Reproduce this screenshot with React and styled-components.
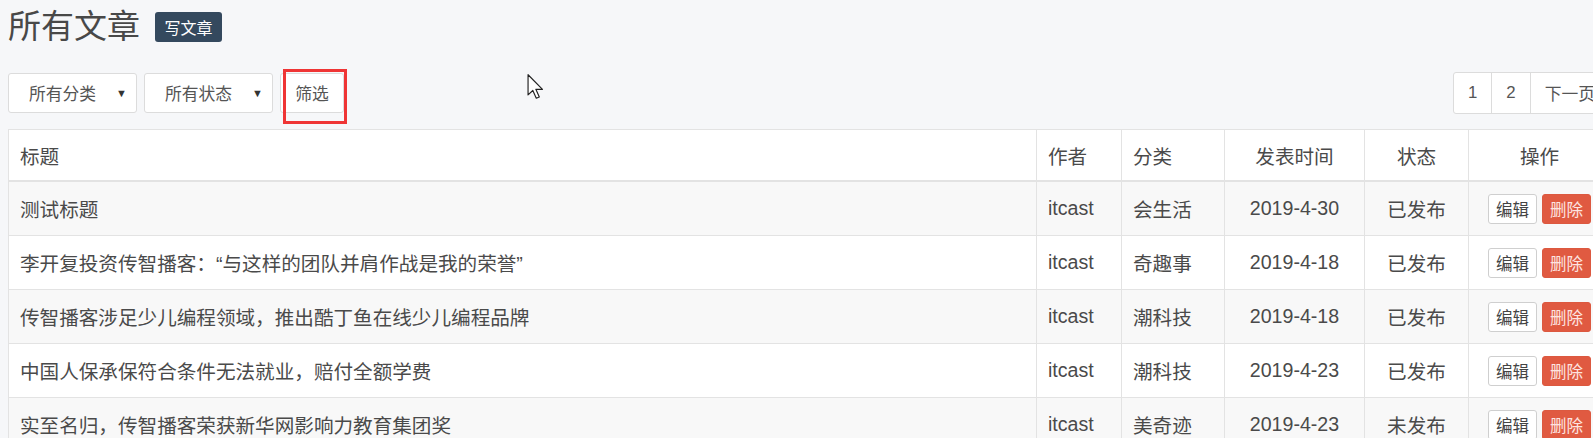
import React from "react";
import styled, { createGlobalStyle } from "styled-components";

const GlobalStyle = createGlobalStyle`
  html, body {
    margin: 0;
    padding: 0;
    overflow: hidden;
    background: #f6f7f9;
  }
  body {
    font-family: "Liberation Sans", "Noto Sans CJK SC", sans-serif;
    color: #4a4a4a;
  }
`;

const Page = styled.div`
  position: relative;
  width: 1602px;
  padding-left: 8px;
`;

const Header = styled.div`
  display: flex;
  align-items: center;
  height: 54px;
`;

const Title = styled.h1`
  margin: 0;
  font-size: 33px;
  font-weight: normal;
  line-height: 36px;
  color: #484848;
`;

const Badge = styled.span`
  display: inline-flex;
  align-items: center;
  justify-content: center;
  margin-left: 15px;
  width: 67px;
  height: 30px;
  border-radius: 3px;
  background: #34495e;
  color: #fff;
  font-size: 16px;
`;

const Toolbar = styled.div`
  display: flex;
  align-items: center;
  gap: 7px;
  padding: 18px 0 15px;
`;

const Select = styled.div`
  box-sizing: border-box;
  display: flex;
  align-items: center;
  justify-content: space-between;
  width: 129px;
  height: 40px;
  padding: 0 9px 0 20px;
  background: #fff;
  border: 1px solid #dcdcdc;
  border-radius: 3px;
  font-size: 16.8px;
  color: #555;
`;

const Caret = styled.span`
  font-size: 11px;
  color: #333;
`;

const FilterWrap = styled.div`
  position: relative;
`;

const Button = styled.div`
  box-sizing: border-box;
  display: flex;
  align-items: center;
  justify-content: center;
  width: 64px;
  height: 40px;
  background: #fff;
  border: 1px solid #dcdcdc;
  border-radius: 3px;
  font-size: 16.8px;
  color: #555;
`;

const Mark = styled.div`
  position: absolute;
  left: 3px;
  top: -4px;
  width: 64px;
  height: 55px;
  box-sizing: border-box;
  border: 3px solid #ef3535;
`;

const Pager = styled.div`
  display: flex;
  margin-left: auto;
  height: 40px;
  background: #fff;
  border: 1px solid #dcdcdc;
  border-radius: 3px;
`;

const PageItem = styled.div`
  display: flex;
  align-items: center;
  padding: 0 14px;
  font-size: 16.8px;
  color: #555;
  white-space: nowrap;
  border-left: ${(p) => (p.first ? "none" : "1px solid #dcdcdc")};
`;

const Cursor = styled.svg`
  position: absolute;
  left: 527px;
  top: 74px;
`;

const Table = styled.table`
  width: 1602px;
  table-layout: fixed;
  border-collapse: collapse;
  background: #fff;
  border: 1px solid #e3e3e3;
  font-size: 19.6px;
`;

const Th = styled.th`
  height: 50px;
  padding: 0 11px;
  font-weight: normal;
  text-align: ${(p) => (p.center ? "center" : "left")};
  border: 1px solid #e3e3e3;
  border-bottom-width: 2px;
  color: #4a4a4a;
`;

const Row = styled.tr`
  background: ${(p) => (p.striped ? "#f8f8f8" : "#fff")};
`;

const Td = styled.td`
  height: 53px;
  padding: 0 11px;
  text-align: ${(p) => (p.center ? "center" : "left")};
  border: 1px solid #e3e3e3;
  white-space: nowrap;
  color: #4a4a4a;
`;

const Actions = styled.div`
  display: flex;
  justify-content: center;
  gap: 5px;
`;

const SmallBtn = styled.span`
  box-sizing: border-box;
  display: inline-flex;
  align-items: center;
  justify-content: center;
  width: 49px;
  height: 30px;
  border-radius: 3px;
  font-size: 16.5px;
  border: 1px solid ${(p) => (p.danger ? "#dc5940" : "#cfcfcf")};
  background: ${(p) => (p.danger ? "#e05a41" : "#fff")};
  color: ${(p) => (p.danger ? "#fde4e0" : "#444")};
`;

const posts = [
  { title: "测试标题", author: "itcast", cat: "会生活", date: "2019-4-30", status: "已发布" },
  { title: "李开复投资传智播客：“与这样的团队并肩作战是我的荣誉”", author: "itcast", cat: "奇趣事", date: "2019-4-18", status: "已发布" },
  { title: "传智播客涉足少儿编程领域，推出酷丁鱼在线少儿编程品牌", author: "itcast", cat: "潮科技", date: "2019-4-18", status: "已发布" },
  { title: "中国人保承保符合条件无法就业，赔付全额学费", author: "itcast", cat: "潮科技", date: "2019-4-23", status: "已发布" },
  { title: "实至名归，传智播客荣获新华网影响力教育集团奖", author: "itcast", cat: "美奇迹", date: "2019-4-23", status: "未发布" },
];

export default function App() {
  return (
    <>
      <GlobalStyle />
      <Page>
        <Header>
          <Title>所有文章</Title>
          <Badge>写文章</Badge>
        </Header>
        <Toolbar>
          <Select>
            所有分类 <Caret>▼</Caret>
          </Select>
          <Select>
            所有状态 <Caret>▼</Caret>
          </Select>
          <FilterWrap>
            <Button>筛选</Button>
            <Mark />
          </FilterWrap>
          <Pager>
            <PageItem first>1</PageItem>
            <PageItem>2</PageItem>
            <PageItem>下一页</PageItem>
          </Pager>
        </Toolbar>
        <Table>
          <colgroup>
            <col style={{ width: 1028 }} />
            <col style={{ width: 85 }} />
            <col style={{ width: 103 }} />
            <col style={{ width: 140 }} />
            <col style={{ width: 104 }} />
            <col style={{ width: 142 }} />
          </colgroup>
          <thead>
            <tr>
              <Th>标题</Th>
              <Th>作者</Th>
              <Th>分类</Th>
              <Th center>发表时间</Th>
              <Th center>状态</Th>
              <Th center>操作</Th>
            </tr>
          </thead>
          <tbody>
            {posts.map((p, i) => (
              <Row key={i} striped={i % 2 === 0}>
                <Td>{p.title}</Td>
                <Td>{p.author}</Td>
                <Td>{p.cat}</Td>
                <Td center>{p.date}</Td>
                <Td center>{p.status}</Td>
                <Td center>
                  <Actions>
                    <SmallBtn>编辑</SmallBtn>
                    <SmallBtn danger>删除</SmallBtn>
                  </Actions>
                </Td>
              </Row>
            ))}
          </tbody>
        </Table>
        <Cursor width="18" height="26" viewBox="0 0 12 18">
          <path
            d="M0.5 0.5 L0.5 14.5 L3.8 11.4 L6.2 16.8 L8.3 15.9 L5.9 10.6 L10.5 10.6 Z"
            fill="#fff"
            stroke="#222"
            strokeWidth="0.8"
            strokeLinejoin="round"
          />
        </Cursor>
      </Page>
    </>
  );
}
